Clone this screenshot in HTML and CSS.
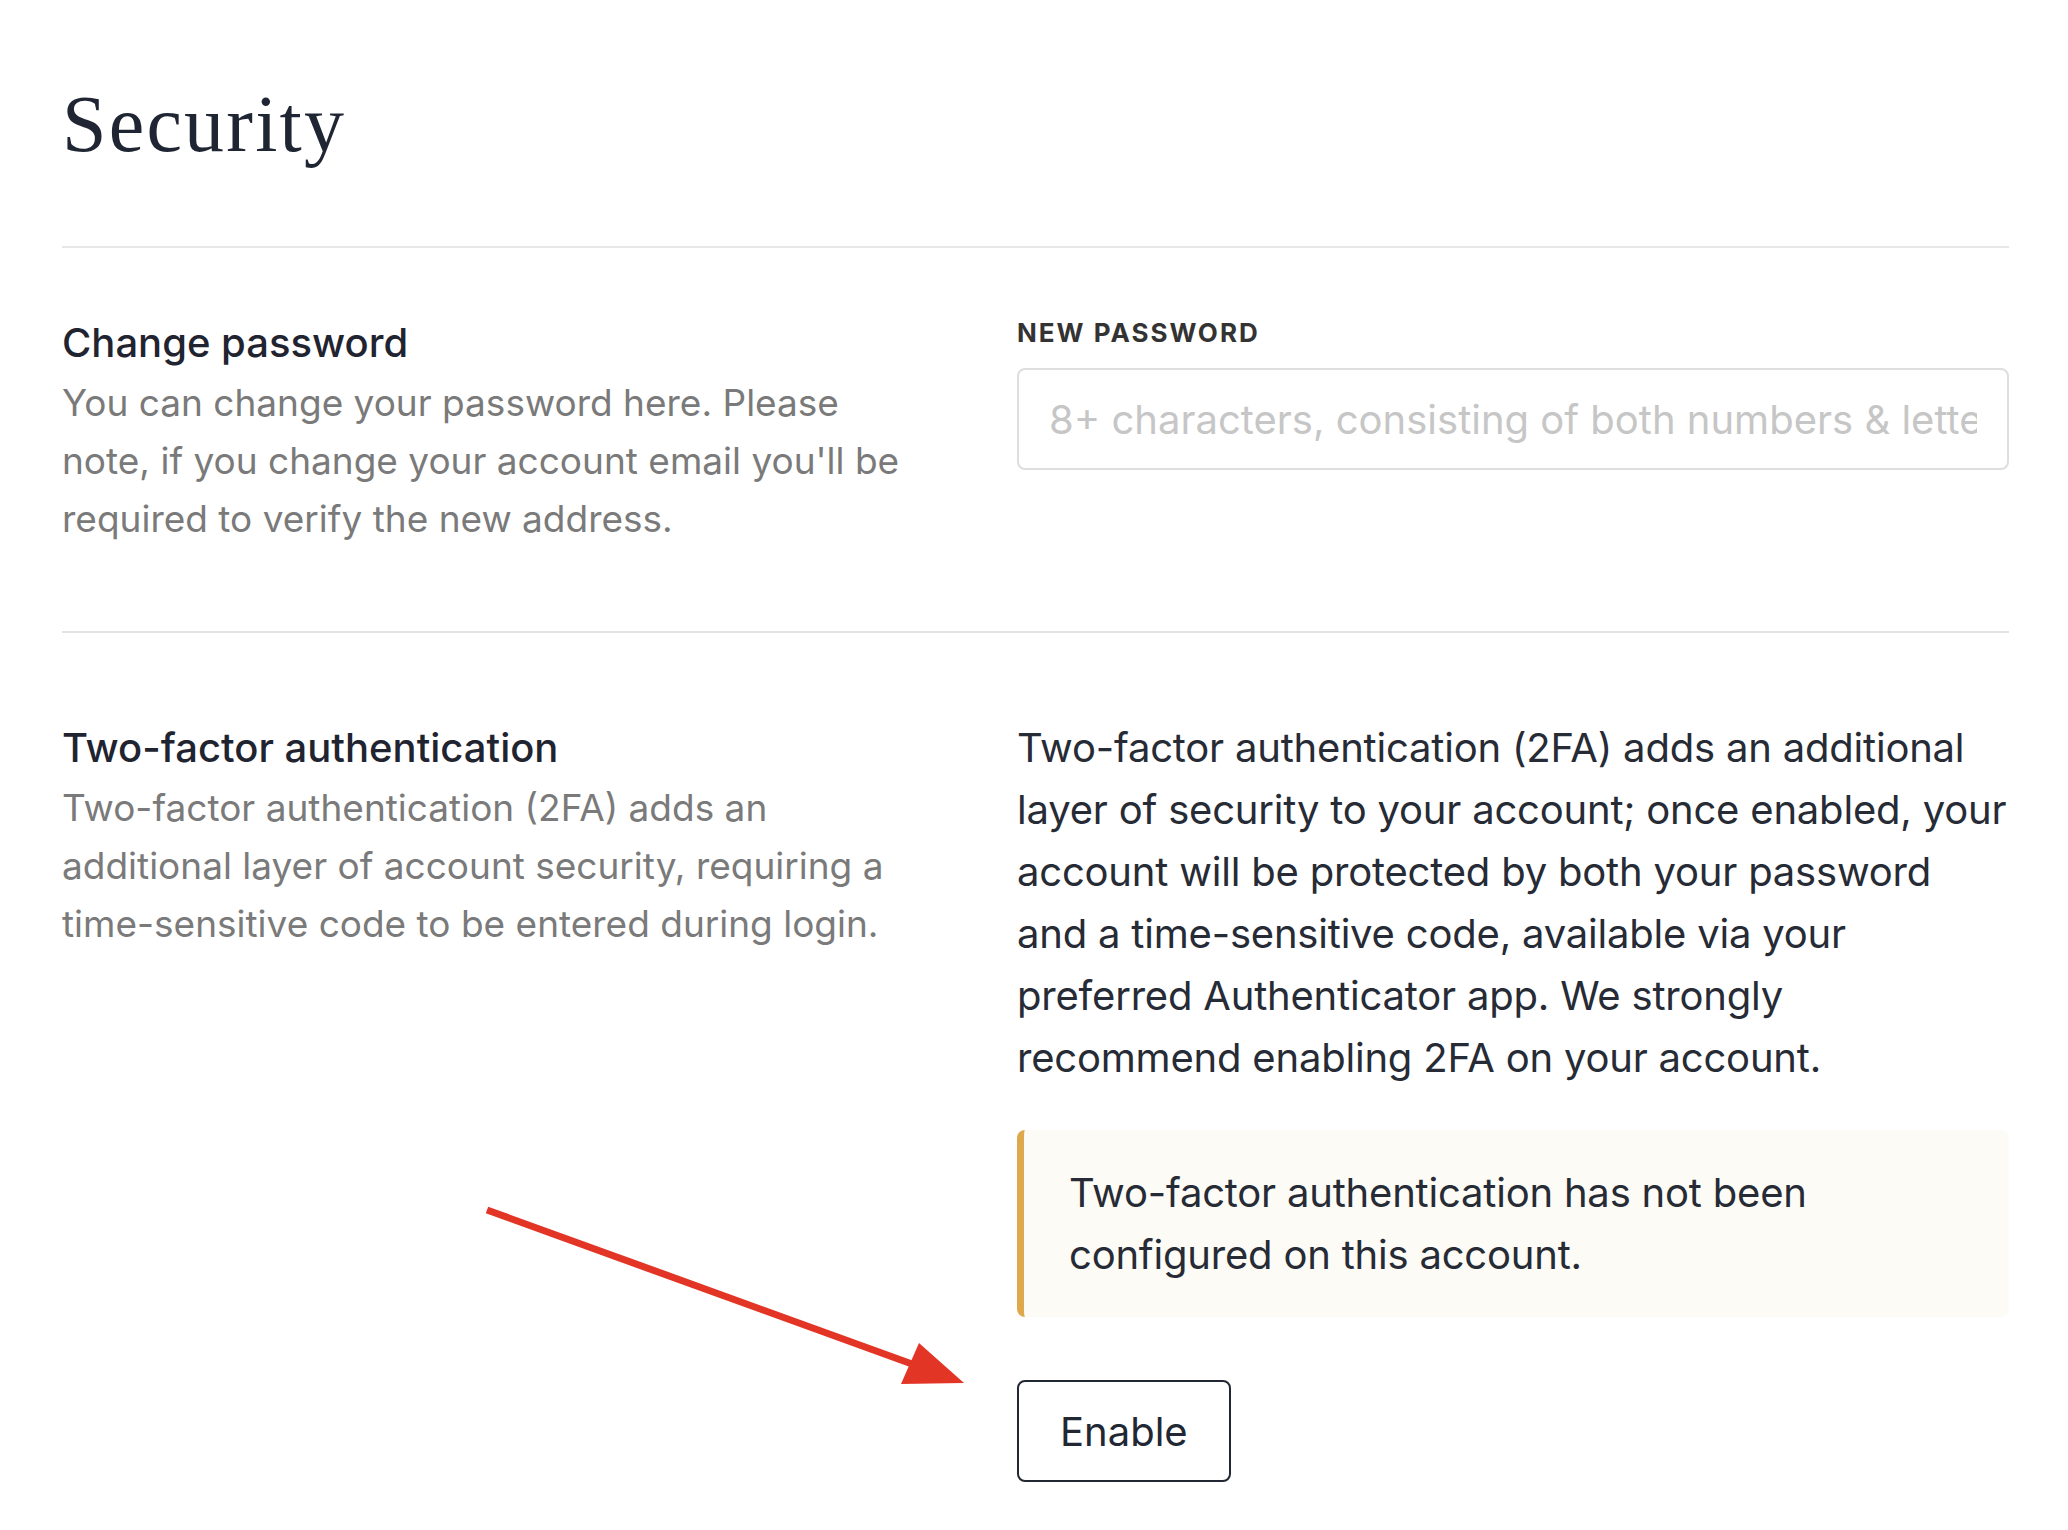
FILE: index.html
```html
<!DOCTYPE html>
<html lang="en">
<head>
  <meta charset="UTF-8">
  <meta name="viewport" content="width=device-width, initial-scale=1">
  <title>Account - Security</title>
  <link rel="stylesheet" href="styles.css">
</head>
<body>

<main class="page">
  <h1 class="page-title">Security</h1>

  <!-- Password -->
  <section class="setting">
    <div class="setting-info">
      <h2>Change password</h2>
      <p>You can change your password here. Please note, if you change your account email you'll be required to verify the new address.</p>
    </div>
    <div class="setting-body">
      <label class="field-label" for="newPassword">New password</label>
      <input class="field-input" type="password" id="newPassword" placeholder="8+ characters, consisting of both numbers &amp; letters">
    </div>
  </section>

  <!-- 2FA -->
  <section class="setting setting-2fa">
    <div class="setting-info">
      <h2>Two-factor authentication</h2>
      <p>Two-factor authentication (2FA) adds an additional layer of account security, requiring a time-sensitive code to be entered during login.</p>
    </div>
    <div class="setting-body">
      <p class="lead">Two-factor authentication (2FA) adds an additional layer of security to your account; once enabled, your account will be protected by both your password and a time-sensitive code, available via your preferred Authenticator app. We strongly recommend enabling 2FA on your account.</p>
      <div class="notice">Two-factor authentication has not been configured on this account.</div>
      <button class="btn-outline" type="button">Enable</button>
    </div>
  </section>

  <!-- annotation arrow -->
  <svg class="annotation" width="2068" height="1530" viewBox="0 0 2068 1530" aria-hidden="true">
    <line x1="487" y1="1210" x2="912" y2="1364" stroke="#e33526" stroke-width="7" stroke-linecap="butt"/>
    <polygon points="919,1343 964,1383 901,1384" fill="#e33526"/>
  </svg>
</main>

</body>
</html>
```

FILE: styles.css
```css
* { box-sizing: border-box; }

body {
  margin: 0;
  font-family: Inter, "Noto Sans", sans-serif;
  background: #fff;
  color: #262b35;
}

.page {
  position: relative;
  padding: 0 59px 0 62px;
  min-height: 1530px;
}

.page-title {
  margin: 0;
  padding-top: 84px;
  font-family: "Liberation Serif", serif;
  font-weight: 400;
  font-size: 80px;
  line-height: 80px;
  letter-spacing: 2.2px;
  color: #1f2532;
}

.setting {
  display: grid;
  grid-template-columns: 850px 1fr;
  column-gap: 105px;
  align-items: start;
  padding: 66px 0 83px;
  border-top: 2px solid #e7e7e7;
  margin-top: 82px;
}

.setting + .setting {
  margin-top: 0;
}

.setting-2fa {
  padding-top: 86px;
  border-top-color: #e3e3e3;
}

.setting-info h2 {
  margin: 0;
  font-size: 40px;
  font-weight: 500;
  line-height: 57px;
  color: #1f2430;
}

.setting-info p {
  margin: 3px 0 0;
  font-size: 37px;
  line-height: 58px;
  color: #7a7a7a;
}

.field-label {
  display: block;
  font-size: 26px;
  font-weight: 700;
  line-height: 38px;
  letter-spacing: 2px;
  text-transform: uppercase;
  color: #333;
  margin-bottom: 16px;
}

.field-input {
  display: block;
  width: 100%;
  height: 102px;
  padding: 0 30px;
  border: 2px solid #dedede;
  border-radius: 8px;
  font-family: inherit;
  font-size: 40px;
  color: #262b35;
}

.field-input::placeholder {
  color: #c6c6c6;
}

.lead {
  margin: -2px 0 0;
  font-size: 40px;
  line-height: 62px;
  letter-spacing: -0.2px;
}

.notice {
  margin-top: 41px;
  padding: 32px 45px 31px 45px;
  background: #fdfbf6;
  border-left: 7px solid #dea94c;
  border-radius: 8px;
  font-size: 40px;
  line-height: 62px;
  letter-spacing: -0.2px;
}

.btn-outline {
  display: block;
  margin-top: 63px;
  height: 102px;
  padding: 0 41px;
  background: #fff;
  border: 2.5px solid #222833;
  border-radius: 8px;
  font-family: inherit;
  font-size: 40px;
  color: #222833;
  cursor: pointer;
}

.annotation {
  position: absolute;
  top: 0;
  left: 0;
  pointer-events: none;
}
```
